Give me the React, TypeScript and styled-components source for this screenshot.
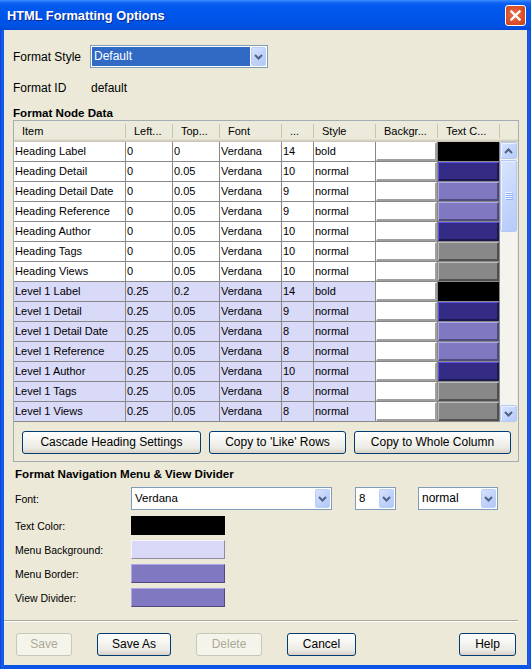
import React from 'react';
import styled, { createGlobalStyle, css } from 'styled-components';

const FONT = `"Liberation Sans", Arial, sans-serif`;

const GlobalStyle = createGlobalStyle`
  html, body {
    margin: 0;
    padding: 0;
    background: #ffffff;
  }
  body {
    font-family: ${FONT};
  }
`;

type Tone = 'white' | 'black' | 'navy' | 'purple' | 'gray' | 'lavender';

const tones: Record<Tone, { fill: string; hi: string; lo: string }> = {
  white: { fill: '#ffffff', hi: '#ffffff', lo: '#a0a0a0' },
  black: { fill: '#000000', hi: '#000000', lo: '#000000' },
  navy: { fill: '#342c84', hi: '#5c52e6', lo: '#1c1850' },
  purple: { fill: '#8079c2', hi: '#aca7e6', lo: '#4f4b7c' },
  gray: { fill: '#888888', hi: '#bdbdbd', lo: '#505050' },
  lavender: { fill: '#d9d9f7', hi: '#f6f6ff', lo: '#8c8ca4' },
};

type Row = {
  item: string;
  left: string;
  top: string;
  size: string;
  style: string;
  color: Tone;
  level: number;
};

const rows: Row[] = [
  { item: 'Heading Label', left: '0', top: '0', size: '14', style: 'bold', color: 'black', level: 0 },
  { item: 'Heading Detail', left: '0', top: '0.05', size: '10', style: 'normal', color: 'navy', level: 0 },
  { item: 'Heading Detail Date', left: '0', top: '0.05', size: '9', style: 'normal', color: 'purple', level: 0 },
  { item: 'Heading Reference', left: '0', top: '0.05', size: '9', style: 'normal', color: 'purple', level: 0 },
  { item: 'Heading Author', left: '0', top: '0.05', size: '10', style: 'normal', color: 'navy', level: 0 },
  { item: 'Heading Tags', left: '0', top: '0.05', size: '10', style: 'normal', color: 'gray', level: 0 },
  { item: 'Heading Views', left: '0', top: '0.05', size: '10', style: 'normal', color: 'gray', level: 0 },
  { item: 'Level 1 Label', left: '0.25', top: '0.2', size: '14', style: 'bold', color: 'black', level: 1 },
  { item: 'Level 1 Detail', left: '0.25', top: '0.05', size: '9', style: 'normal', color: 'navy', level: 1 },
  { item: 'Level 1 Detail Date', left: '0.25', top: '0.05', size: '8', style: 'normal', color: 'purple', level: 1 },
  { item: 'Level 1 Reference', left: '0.25', top: '0.05', size: '8', style: 'normal', color: 'purple', level: 1 },
  { item: 'Level 1 Author', left: '0.25', top: '0.05', size: '10', style: 'normal', color: 'navy', level: 1 },
  { item: 'Level 1 Tags', left: '0.25', top: '0.05', size: '8', style: 'normal', color: 'gray', level: 1 },
  { item: 'Level 1 Views', left: '0.25', top: '0.05', size: '8', style: 'normal', color: 'gray', level: 1 },
];

const headers = ['Item', 'Left...', 'Top...', 'Font', '...', 'Style', 'Backgr...', 'Text C...'];
const COLS = '112px 47px 47px 62px 32px 62px 62px 62px';

const Chevron = ({ up }: { up?: boolean }) => (
  <svg width="9" height="6" viewBox="0 0 9 6">
    <path
      d={up ? 'M1 5 L4.5 1.5 L8 5' : 'M1 1 L4.5 4.5 L8 1'}
      fill="none"
      stroke="#4d6185"
      strokeWidth="2"
    />
  </svg>
);

const ComboBox = ({
  w,
  value,
  selected,
  size = 12,
}: {
  w: number;
  value: string;
  selected?: boolean;
  size?: number;
}) => (
  <Combo $w={w}>
    <ComboText $selected={selected} $size={size}>
      {value}
    </ComboText>
    <ComboArrow>
      <Chevron />
    </ComboArrow>
  </Combo>
);

const App = () => {
  return (
    <>
      <GlobalStyle />
      <Frame>
        <TitleBar>
          <TitleText>HTML Formatting Options</TitleText>
          <CloseButton>
            <svg width="11" height="11" viewBox="0 0 11 11">
              <path
                d="M1.5 1.5 L9.5 9.5 M9.5 1.5 L1.5 9.5"
                stroke="#ffffff"
                strokeWidth="2.3"
                strokeLinecap="square"
              />
            </svg>
          </CloseButton>
        </TitleBar>

        <Client>
          <FieldRow>
            <FieldLabel>Format Style</FieldLabel>
            <ComboBox w={178} value="Default" selected />
          </FieldRow>
          <InfoRow>
            <FieldLabel $w={78}>Format ID</FieldLabel>
            <span>default</span>
          </InfoRow>

          <SectionTitle>Format Node Data</SectionTitle>
          <Panel>
            <Header>
              <HeaderCols>
                {headers.map((h) => (
                  <HeaderCell key={h}>{h}</HeaderCell>
                ))}
              </HeaderCols>
            </Header>
            <TableArea>
              <Rows>
                {rows.map((r) => (
                  <TableRow key={r.item} $level={r.level}>
                    <Cell>{r.item}</Cell>
                    <Cell>{r.left}</Cell>
                    <Cell>{r.top}</Cell>
                    <Cell>Verdana</Cell>
                    <Cell>{r.size}</Cell>
                    <Cell>{r.style}</Cell>
                    <Cell>
                      <Swatch $tone="white" />
                    </Cell>
                    <Cell>
                      <Swatch $tone={r.color} />
                    </Cell>
                  </TableRow>
                ))}
              </Rows>
              <ScrollBar>
                <ScrollBtn>
                  <Chevron up />
                </ScrollBtn>
                <Thumb>
                  <svg width="8" height="8" viewBox="0 0 8 8">
                    {[0, 2, 4, 6].map((y) => (
                      <g key={y}>
                        <rect x="0" y={y} width="7" height="1" fill="#eef4fe" />
                        <rect x="1" y={y + 1} width="7" height="1" fill="#8cb0f8" />
                      </g>
                    ))}
                  </svg>
                </Thumb>
                <Track />
                <ScrollBtn>
                  <Chevron />
                </ScrollBtn>
              </ScrollBar>
            </TableArea>
            <ButtonBar>
              <XPButton>Cascade Heading Settings</XPButton>
              <XPButton>Copy to 'Like' Rows</XPButton>
              <XPButton>Copy to Whole Column</XPButton>
            </ButtonBar>
          </Panel>

          <Lower>
            <SectionTitle $tight>Format Navigation Menu &amp; View Divider</SectionTitle>
            <FontRow>
              <SmallLabel>Font:</SmallLabel>
              <ComboBox w={201} value="Verdana" size={11.5} />
              <Spacer $w={23} />
              <ComboBox w={41} value="8" size={11.5} />
              <Spacer $w={22} />
              <ComboBox w={80} value="normal" size={12} />
            </FontRow>
            <SwatchList>
              <SwatchRow>
                <SmallLabel>Text Color:</SmallLabel>
                <BigSwatch $tone="black" />
              </SwatchRow>
              <SwatchRow>
                <SmallLabel>Menu Background:</SmallLabel>
                <BigSwatch $tone="lavender" />
              </SwatchRow>
              <SwatchRow>
                <SmallLabel>Menu Border:</SmallLabel>
                <BigSwatch $tone="purple" />
              </SwatchRow>
              <SwatchRow>
                <SmallLabel>View Divider:</SmallLabel>
                <BigSwatch $tone="purple" />
              </SwatchRow>
            </SwatchList>
          </Lower>

          <Separator />

          <Footer>
            <XPButton $w={56} disabled>
              Save
            </XPButton>
            <XPButton $w={74}>Save As</XPButton>
            <XPButton $w={66} disabled>
              Delete
            </XPButton>
            <XPButton $w={69}>Cancel</XPButton>
            <FooterGap />
            <XPButton $w={57}>Help</XPButton>
          </Footer>
        </Client>
      </Frame>
    </>
  );
};

const Frame = styled.div`
  width: 531px;
  height: 669px;
  display: flex;
  flex-direction: column;
  background: linear-gradient(to right, #0843d0 0, #1a5ff0 2px, #0a55e6 4px, #0a55e6 527px, #1a5ff0 529px, #0843d0 531px);
  font-family: ${FONT};
  color: #000;
`;

const TitleBar = styled.div`
  height: 30px;
  flex: none;
  display: flex;
  align-items: center;
  justify-content: space-between;
  padding: 0 5px 0 7px;
  box-sizing: border-box;
  background: linear-gradient(
    to bottom,
    #3d8dff 0px,
    #0d62f2 3px,
    #0058ee 8px,
    #0054e8 18px,
    #0052e3 26px,
    #0048d4 30px
  );
`;

const TitleText = styled.div`
  color: #ffffff;
  font-family: ${FONT};
  font-weight: bold;
  font-size: 12.8px;
  text-shadow: 1px 1px 0 #0c2a8f;
  padding-top: 1px;
`;

const CloseButton = styled.div`
  width: 21px;
  height: 21px;
  box-sizing: border-box;
  border: 1px solid #ffffff;
  border-radius: 3px;
  background: radial-gradient(circle at 45% 45%, #e9744f 0%, #d9522c 55%, #c23e1b 100%);
  display: flex;
  align-items: center;
  justify-content: center;
`;

const Client = styled.div`
  flex: 1;
  margin: 0 4px 4px;
  background: #ece9d8;
  display: flex;
  flex-direction: column;
  padding: 15px 8px 0 9px;
  font-size: 12px;
`;

const FieldRow = styled.div`
  display: flex;
  align-items: center;
  height: 23px;
`;

const InfoRow = styled.div`
  display: flex;
  align-items: center;
  height: 16px;
  margin-top: 12px;
  font-size: 12px;
`;

const FieldLabel = styled.div<{ $w?: number }>`
  width: ${(p) => p.$w ?? 77}px;
  flex: none;
  font-size: 12px;
`;

const Combo = styled.div<{ $w: number }>`
  width: ${(p) => p.$w}px;
  height: 23px;
  box-sizing: border-box;
  border: 1px solid #7f9db9;
  background: #ffffff;
  padding: 1px;
  display: flex;
  flex: none;
`;

const ComboText = styled.div<{ $selected?: boolean; $size: number }>`
  flex: 1;
  padding-left: 2px;
  font-size: ${(p) => p.$size}px;
  line-height: 19px;
  white-space: nowrap;
  ${(p) =>
    p.$selected &&
    css`
      background: #316ac5;
      color: #ffffff;
    `}
`;

const ComboArrow = styled.div`
  width: 15px;
  margin-left: 1px;
  box-sizing: border-box;
  border: 1px solid #bccdf6;
  border-radius: 2px;
  background: linear-gradient(135deg, #d6e2fd 0%, #c2d3fb 50%, #b3c8f6 100%);
  display: flex;
  align-items: center;
  justify-content: center;
`;

const SectionTitle = styled.div<{ $tight?: boolean }>`
  margin-top: ${(p) => (p.$tight ? 5 : 10)}px;
  height: 14px;
  line-height: 14px;
  font-weight: bold;
  font-size: 11.6px;
`;

const Panel = styled.div`
  border: 1px solid #a5acb2;
  display: flex;
  flex-direction: column;
`;

const Header = styled.div`
  height: 21px;
  background: #ebeadb;
  box-shadow: inset 0 -1px #cbc7b8, inset 0 -2px #d6d2c2, inset 0 -3px #e2decd;
`;

const HeaderCols = styled.div`
  display: grid;
  grid-template-columns: ${COLS};
  height: 100%;
`;

const HeaderCell = styled.div`
  position: relative;
  padding-left: 8px;
  font-size: 11px;
  line-height: 20px;
  white-space: nowrap;
  overflow: hidden;

  &::after {
    content: '';
    position: absolute;
    right: 0;
    top: 3px;
    bottom: 4px;
    width: 1px;
    background: #c7c5b2;
    box-shadow: 1px 0 #ffffff;
  }
`;

const TableArea = styled.div`
  display: flex;
  height: 280px;
`;

const Rows = styled.div`
  width: 486px;
  flex: none;
`;

const TableRow = styled.div<{ $level: number }>`
  display: grid;
  grid-template-columns: ${COLS};
  height: 20px;
  background: ${(p) => (p.$level === 0 ? '#ffffff' : '#d9d9f8')};
`;

const Cell = styled.div`
  border-right: 1px solid #888888;
  border-bottom: 1px solid #888888;
  padding-left: 1px;
  font-size: 11px;
  line-height: 19px;
  white-space: nowrap;
  overflow: hidden;
  display: flex;
`;

const Swatch = styled.div<{ $tone: Tone }>`
  flex: 1;
  margin-left: -1px;
  box-sizing: border-box;
  background: ${(p) => tones[p.$tone].fill};
  border: 1px solid;
  border-color: ${(p) => tones[p.$tone].hi} ${(p) => tones[p.$tone].lo} ${(p) => tones[p.$tone].lo}
    ${(p) => tones[p.$tone].hi};
  box-shadow: inset -1px -1px ${(p) => tones[p.$tone].lo};
`;

const ScrollBar = styled.div`
  width: 17px;
  flex: none;
  display: flex;
  flex-direction: column;
  background: #f4f3ee;
`;

const scrollPart = css`
  box-sizing: border-box;
  border: 1px solid #b4c8f6;
  border-radius: 2px;
  background: linear-gradient(135deg, #d9e4fe 0%, #c6d6fc 50%, #b7cbf8 100%);
  box-shadow: inset 1px 1px #eef3fe;
  display: flex;
  align-items: center;
  justify-content: center;
`;

const ScrollBtn = styled.div`
  ${scrollPart};
  height: 17px;
  flex: none;
`;

const Thumb = styled.div`
  ${scrollPart};
  height: 72px;
  flex: none;
  margin-top: 1px;
`;

const Track = styled.div`
  flex: 1;
`;

const ButtonBar = styled.div`
  display: grid;
  grid-template-columns: 179px 137px 157px;
  gap: 8px;
  padding: 8px 9px 8px 8px;
  border-top: 1px solid #ece9d8;
  box-sizing: border-box;
  height: 39px;
  align-items: center;
`;

const XPButton = styled.div<{ $w?: number; disabled?: boolean }>`
  height: 23px;
  ${(p) => p.$w && `width: ${p.$w}px;`}
  flex: none;
  box-sizing: border-box;
  border: 1px solid #003c74;
  border-radius: 3px;
  background: linear-gradient(to bottom, #ffffff 0%, #f6f6f2 35%, #ecebe5 75%, #d8d2c6 100%);
  font-size: 12px;
  line-height: 21px;
  text-align: center;
  white-space: nowrap;
  ${(p) =>
    p.disabled &&
    css`
      border-color: #c9c7ba;
      background: #f5f4ea;
      color: #aca899;
    `}
`;

const Lower = styled.div`
  padding-left: 2px;
  display: flex;
  flex-direction: column;
`;

const FontRow = styled.div`
  display: flex;
  align-items: center;
  height: 23px;
  margin-top: 6px;
`;

const SmallLabel = styled.div`
  width: 116px;
  flex: none;
  font-size: 10.5px;
`;

const Spacer = styled.div<{ $w: number }>`
  width: ${(p) => p.$w}px;
  flex: none;
`;

const SwatchList = styled.div`
  display: flex;
  flex-direction: column;
  gap: 5px;
  margin-top: 6px;
`;

const SwatchRow = styled.div`
  display: flex;
  align-items: center;
  height: 19px;
`;

const BigSwatch = styled.div<{ $tone: Tone }>`
  width: 94px;
  height: 19px;
  box-sizing: border-box;
  background: ${(p) => tones[p.$tone].fill};
  border: 1px solid;
  border-color: ${(p) => tones[p.$tone].hi} ${(p) => tones[p.$tone].lo} ${(p) => tones[p.$tone].lo}
    ${(p) => tones[p.$tone].hi};
`;

const Separator = styled.div`
  margin: 13px 1px 0 -9px;
  height: 0;
  border-top: 1px solid #aca899;
  border-bottom: 1px solid #ffffff;
`;

const Footer = styled.div`
  display: flex;
  gap: 25px;
  margin-top: 11px;
  padding: 0 3px;
`;

const FooterGap = styled.div`
  flex: 1;
`;

export default App;
